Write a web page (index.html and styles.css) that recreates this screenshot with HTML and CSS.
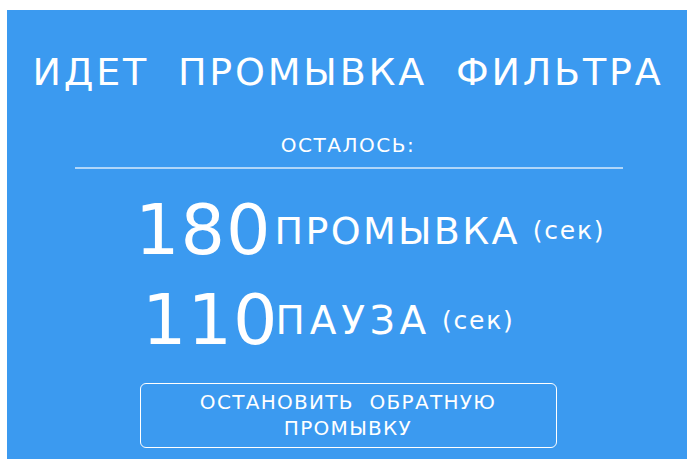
FILE: index.html
```html
<!DOCTYPE html>
<html lang="ru">
<head>
<meta charset="utf-8">
<title>Промывка фильтра</title>
<link rel="stylesheet" href="styles.css">
</head>
<body>
  <main class="panel">
    <h1 class="title">ИДЕТ ПРОМЫВКА ФИЛЬТРА</h1>
    <div class="subtitle">ОСТАЛОСЬ:</div>
    <hr class="divider">
    <div class="timer timer--wash">
      <span class="timer__value">180</span>
      <span class="timer__label">ПРОМЫВКА</span>
      <span class="timer__unit">(сек)</span>
    </div>
    <div class="timer timer--pause">
      <span class="timer__value">110</span>
      <span class="timer__label">ПАУЗА</span>
      <span class="timer__unit">(сек)</span>
    </div>
    <button class="stop-btn" type="button">ОСТАНОВИТЬ ОБРАТНУЮ<br>ПРОМЫВКУ</button>
  </main>
</body>
</html>
```

FILE: styles.css
```css
html, body {
  margin: 0;
  padding: 0;
  background: #ffffff;
  overflow: hidden;
}

body {
  font-family: "DejaVu Sans", "Noto Sans", sans-serif;
  color: #ffffff;
}

.panel {
  margin: 10px 0 0 7px;
  width: 682px;
  min-height: 460px;
  box-sizing: border-box;
  padding-top: 40px;
  background: #3b9af0;
  display: flex;
  flex-direction: column;
  align-items: center;
}

.title {
  margin: 0;
  font-size: 38px;
  line-height: 44px;
  font-weight: normal;
  letter-spacing: 2.8px;
  word-spacing: 14px;
}

.subtitle {
  margin-top: 39px;
  font-size: 20px;
  line-height: 24px;
  letter-spacing: 1.5px;
}

.divider {
  align-self: stretch;
  margin: 10px 66px 0 68px;
  border: 0;
  height: 2px;
  background: rgba(255, 255, 255, 0.6);
}

.timer {
  align-self: stretch;
  display: flex;
  align-items: center;
  height: 71px;
}

.timer--wash {
  margin-top: 26px;
  padding-left: 128px;
}

.timer--pause {
  margin-top: 19px;
  padding-left: 135px;
}

.timer__value {
  font-size: 70px;
  line-height: 71px;
  letter-spacing: 1px;
}

.timer--wash .timer__value {
  margin-right: 3px;
}

.timer--pause .timer__value {
  margin-right: -3px;
}

.timer__label {
  font-size: 38px;
  line-height: 44px;
  letter-spacing: 2.3px;
}

.timer--pause .timer__label {
  font-size: 39px;
  letter-spacing: 4.8px;
}

.timer__unit {
  margin-left: 13px;
  font-size: 25px;
  line-height: 30px;
  letter-spacing: 1.75px;
}

.timer--pause .timer__unit {
  margin-left: 11px;
}

.stop-btn {
  margin-top: 27px;
  width: 417px;
  box-sizing: border-box;
  padding: 5px 0 6px;
  background: transparent;
  border: 1px solid #ffffff;
  border-radius: 6px;
  color: #ffffff;
  font-family: inherit;
  font-size: 20px;
  line-height: 26px;
  letter-spacing: 1.3px;
  word-spacing: 8px;
}
```
